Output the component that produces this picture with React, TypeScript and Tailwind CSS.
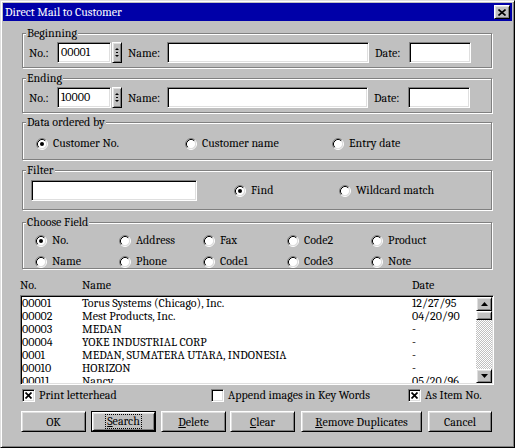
import React from "react";

const sunken =
  "border border-t-[#808080] border-l-[#808080] border-b-white border-r-white shadow-[inset_1px_1px_0_#000,inset_-1px_-1px_0_#dfdfdf]";
const raised =
  "border border-t-white border-l-white border-b-black border-r-black shadow-[inset_1px_1px_0_#dfdfdf,inset_-1px_-1px_0_#808080]";

function Group({
  label,
  className = "",
  children,
}: {
  label: string;
  className?: string;
  children?: React.ReactNode;
}) {
  return (
    <div
      className={`relative ml-[2px] w-[470px] border border-[#808080] shadow-[1px_1px_0_#fff,inset_1px_1px_0_#fff] ${className}`}
    >
      <span className="absolute -top-[8px] left-[3px] bg-[#c0c0c0] px-[1px] leading-[14px]">
        {label}
      </span>
      {children}
    </div>
  );
}

function Radio({ checked = false }: { checked?: boolean }) {
  return (
    <svg width="12" height="12" viewBox="0 0 12 12" className="shrink-0">
      <circle cx="6" cy="6" r="4.5" fill="#fff" />
      <path d="M2.11 9.89 A5.5 5.5 0 0 1 9.89 2.11" stroke="#808080" fill="none" />
      <path d="M9.89 2.11 A5.5 5.5 0 0 1 2.11 9.89" stroke="#fff" fill="none" />
      <path d="M2.82 9.18 A4.5 4.5 0 0 1 9.18 2.82" stroke="#000" fill="none" />
      <path d="M9.18 2.82 A4.5 4.5 0 0 1 2.82 9.18" stroke="#dfdfdf" fill="none" />
      {checked && <circle cx="6" cy="6" r="2" fill="#000" />}
    </svg>
  );
}

function RadioItem({
  label,
  checked = false,
  className = "",
}: {
  label: string;
  checked?: boolean;
  className?: string;
}) {
  return (
    <div className={`flex h-[13px] items-center gap-[5px] leading-[13px] ${className}`}>
      <Radio checked={checked} />
      <span>{label}</span>
    </div>
  );
}

function Check({ checked = false }: { checked?: boolean }) {
  return (
    <div className={`flex h-[13px] w-[13px] shrink-0 items-center justify-center bg-white ${sunken}`}>
      {checked && (
        <svg width="7" height="7" viewBox="0 0 7 7">
          <path d="M0.5 0.5 L6.5 6.5 M6.5 0.5 L0.5 6.5" stroke="#000" strokeWidth="1.7" />
        </svg>
      )}
    </div>
  );
}

function Input({ className = "", value = "" }: { className?: string; value?: string }) {
  return (
    <div className={`h-[21px] bg-white pl-[3px] leading-[19px] ${sunken} ${className}`}>{value}</div>
  );
}

function Spinner() {
  return (
    <div className={`ml-[1px] flex h-[21px] w-[10px] items-center justify-center bg-[#c0c0c0] ${raised}`}>
      <svg width="4" height="11" viewBox="0 0 4 11">
        <path d="M0 3 L4 3 L2 1 Z" fill="#000" />
        <path d="M1 5 L3 5 L3 6 L1 6 Z" fill="#000" />
        <path d="M0 8 L4 8 L2 10 Z" fill="#000" />
      </svg>
    </div>
  );
}

function RangeRow({ no, nameW }: { no: string; nameW: string }) {
  return (
    <div className="flex h-[21px] items-center pl-[6px] pt-0">
      <span className="w-[28px]">No.:</span>
      <Input className="w-[54px]" value={no} />
      <Spinner />
      <span className="ml-[6px] w-[39px]">Name:</span>
      <Input className={nameW} />
      <span className="ml-[6px] w-[34px]">Date:</span>
      <Input className="w-[62px]" />
    </div>
  );
}

function Btn({
  children,
  className = "",
  def = false,
}: {
  children: React.ReactNode;
  className?: string;
  def?: boolean;
}) {
  if (def) {
    return (
      <div className={`h-[21px] border border-black ${className}`}>
        <div className={`flex h-full w-full items-center justify-center bg-[#c0c0c0] ${raised}`}>
          <span className="border border-dotted border-black px-[1px] leading-[13px]">{children}</span>
        </div>
      </div>
    );
  }
  return (
    <div className={`flex h-[21px] items-center justify-center bg-[#c0c0c0] ${raised} ${className}`}>
      {children}
    </div>
  );
}

function ArrowBtn({ up }: { up: boolean }) {
  return (
    <div className={`flex h-[14px] w-[16px] items-center justify-center bg-[#c0c0c0] ${raised}`}>
      <svg width="7" height="4" viewBox="0 0 7 4">
        {up ? <path d="M0 4 L7 4 L3.5 0 Z" fill="#000" /> : <path d="M0 0 L7 0 L3.5 4 Z" fill="#000" />}
      </svg>
    </div>
  );
}

const rows = [
  ["00001", "Torus Systems (Chicago), Inc.", "12/27/95"],
  ["00002", "Mest Products, Inc.", "04/20/90"],
  ["00003", "MEDAN", "-"],
  ["00004", "YOKE INDUSTRIAL CORP", "-"],
  ["0001", "MEDAN, SUMATERA UTARA, INDONESIA", "-"],
  ["00010", "HORIZON", "-"],
  ["00011", "Nancy", "05/20/96"],
];

export default function App() {
  return (
    <div className="h-[448px] w-[515px] overflow-hidden border border-t-[#dfdfdf] border-l-[#dfdfdf] border-b-black border-r-black bg-[#c0c0c0] p-[2px] font-serif [font-family:Liberation_Serif,serif] text-[12px] text-black shadow-[inset_1px_1px_0_#fff,inset_-1px_-1px_0_#808080]">
      <div className="flex h-[18px] items-center justify-between bg-[#0000a8] pl-[2px] pr-[2px] text-white">
        <span className="leading-[18px]">Direct Mail to Customer</span>
        <div className={`flex h-[14px] w-[16px] items-center justify-center bg-[#c0c0c0] ${raised}`}>
          <svg width="8" height="7" viewBox="0 0 8 7">
            <path d="M0.5 0.5 L7.5 6.5 M7.5 0.5 L0.5 6.5" stroke="#000" strokeWidth="1.6" />
          </svg>
        </div>
      </div>

      <div className="flex flex-col pl-[17px]">
        <Group label="Beginning" className="mt-[12px] h-[35px] pt-[8px]">
          <RangeRow no="00001" nameW="w-[202px]" />
        </Group>
        <Group label="Ending" className="mt-[10px] h-[35px] pt-[8px]">
          <RangeRow no="10000" nameW="w-[201px]" />
        </Group>
        <Group label="Data ordered by" className="mt-[9px] h-[38px] pt-[14px] pl-[13px]">
          <div className="flex">
            <RadioItem label="Customer No." checked className="w-[149px]" />
            <RadioItem label="Customer name" className="w-[147px]" />
            <RadioItem label="Entry date" />
          </div>
        </Group>
        <Group label="Filter" className="mt-[10px] h-[40px] pt-[9px] pl-[8px]">
          <div className="flex items-center">
            <Input className="w-[166px]" />
            <RadioItem label="Find" checked className="ml-[37px] w-[105px]" />
            <RadioItem label="Wildcard match" />
          </div>
        </Group>
        <Group label="Choose Field" className="mt-[12px] h-[47px] pt-[11px] pl-[12px]">
          <div className="grid grid-cols-[84px_84px_84px_84px_84px] gap-y-[8px]">
            <RadioItem label="No." checked />
            <RadioItem label="Address" />
            <RadioItem label="Fax" />
            <RadioItem label="Code2" />
            <RadioItem label="Product" />
            <RadioItem label="Name" />
            <RadioItem label="Phone" />
            <RadioItem label="Code1" />
            <RadioItem label="Code3" />
            <RadioItem label="Note" />
          </div>
        </Group>

        <div className="mt-[10px] flex h-[13px] leading-[13px]">
          <span className="w-[62px]">No.</span>
          <span className="w-[330px]">Name</span>
          <span>Date</span>
        </div>

        <div className={`mt-[3px] flex h-[90px] w-[474px] bg-white p-[1px] ${sunken}`}>
          <div className="flex-1 overflow-hidden">
            {rows.map((r, i) => (
              <div key={i} className="flex h-[13px] whitespace-nowrap leading-[13px]">
                <span className="w-[60px]">{r[0]}</span>
                <span className="w-[330px]">{r[1]}</span>
                <span>{r[2]}</span>
              </div>
            ))}
          </div>
          <div className="flex w-[16px] flex-col">
            <ArrowBtn up />
            <div className={`h-[9px] w-[16px] bg-[#c0c0c0] ${raised}`} />
            <div className="flex-1 bg-[repeating-conic-gradient(#c0c0c0_0%_25%,#fff_0%_50%)] bg-[length:2px_2px]" />
            <ArrowBtn up={false} />
          </div>
        </div>

        <div className="mt-[4px] flex h-[13px] items-center leading-[13px]">
          <div className="ml-[2px] flex w-[189px] items-center gap-[4px]">
            <Check checked />
            <span>Print letterhead</span>
          </div>
          <div className="flex w-[197px] items-center gap-[4px]">
            <Check />
            <span>Append images in Key Words</span>
          </div>
          <div className="flex items-center gap-[4px]">
            <Check checked />
            <span>As Item No.</span>
          </div>
        </div>

        <div className="mt-[9px] flex">
          <Btn className="ml-[1px] w-[65px]">OK</Btn>
          <Btn def className="ml-[5px] w-[65px]">
            <span className="underline">S</span>earch
          </Btn>
          <Btn className="ml-[5px] w-[65px]">
            <span className="underline">D</span>elete
          </Btn>
          <Btn className="ml-[4px] w-[65px]">
            <span className="underline">C</span>lear
          </Btn>
          <Btn className="ml-[6px] w-[121px]">
            <span className="underline">R</span>emove Duplicates
          </Btn>
          <Btn className="ml-[6px] w-[64px]">Cancel</Btn>
        </div>
      </div>
    </div>
  );
}
